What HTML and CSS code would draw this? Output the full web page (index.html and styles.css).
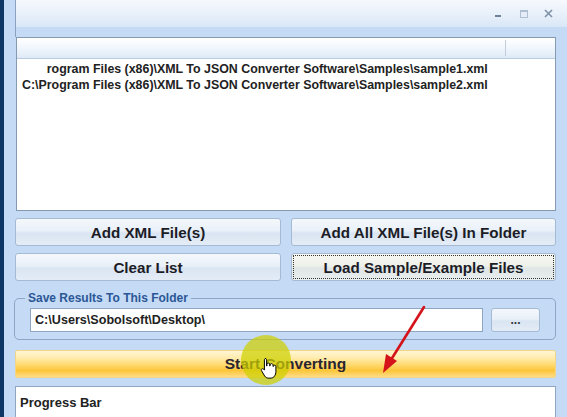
FILE: index.html
```html
<!DOCTYPE html>
<html>
<head>
<meta charset="utf-8">
<link rel="stylesheet" href="styles.css">
</head>
<body>
<div class="window">
  <div class="titlebar">
    <div class="controls">
      <span class="ctl min"></span>
      <span class="ctl max"></span>
      <span class="ctl close">
        <svg width="9" height="9" viewBox="0 0 9 9"><path d="M1 1L8 8M8 1L1 8" stroke="#7f91a8" stroke-width="1.6"/></svg>
      </span>
    </div>
  </div>
  <div class="band"></div>
  <div class="list">
    <div class="list-head"><span class="col"></span></div>
    <div class="list-body">
      <div class="item"><span class="hidden">C:\P</span>rogram Files (x86)\XML To JSON Converter Software\Samples\sample1.xml</div>
      <div class="item">C:\Program Files (x86)\XML To JSON Converter Software\Samples\sample2.xml</div>
    </div>
  </div>
  <div class="btngrid">
    <button class="btn">Add XML File(s)</button>
    <button class="btn">Add All XML File(s) In Folder</button>
    <button class="btn">Clear List</button>
    <button class="btn focus">Load Sample/Example Files</button>
  </div>
  <fieldset class="group">
    <legend>Save Results To This Folder</legend>
    <div class="folder-row">
      <div class="input">C:\Users\Sobolsoft\Desktop\</div>
      <button class="btn small">...</button>
    </div>
  </fieldset>
  <button class="start">Start Converting</button>
  <div class="progress">Progress Bar</div>
</div>

<div class="highlight"></div>
<svg class="arrow" width="60" height="75" viewBox="0 0 60 75">
  <path d="M49 2 L14 58" stroke="#d4141a" stroke-width="2.6" stroke-linecap="round"/>
  <path d="M8 68 L11 49 L22 56 Z" fill="#d4141a"/>
</svg>
<svg class="hand" width="18" height="22" viewBox="0 0 18 22">
  <path d="M5 1.5c1 0 1.6.6 1.6 1.6V9h.3V7.4c0-.9.6-1.4 1.4-1.4s1.4.5 1.4 1.4V9h.3V8c0-.9.6-1.4 1.4-1.4S13 7.1 13 8v1.4h.3c0-.8.6-1.2 1.300-1.2.8 0 1.3.5 1.3 1.4v5.2c0 3-2 6.3-4.8 6.3H8.2c-1.6 0-2.6-.8-3.5-2L1.6 13.8c-.5-.7-.4-1.5.2-1.9.6-.4 1.3-.2 1.8.3l.8.9V3.1c0-1 .6-1.6 1.6-1.6z" fill="#fff" stroke="#000" stroke-width="1"/>
</svg>
</body>
</html>
```

FILE: styles.css
```css
html, body {
  margin: 0;
  padding: 0;
}
body {
  width: 567px;
  height: 417px;
  overflow: hidden;
  position: relative;
  background: #c4daf5;
  border-left: 4px solid #0d3566;
  box-sizing: border-box;
  font-family: "Liberation Sans", Arial, sans-serif;
}
.window {
  display: flex;
  flex-direction: column;
}
.titlebar {
  margin-left: 11px;
  height: 27px;
  border-left: 1px solid #8aa2bf;
  background: linear-gradient(#f6f9fd, #e6eff9 60%, #d9e7f7);
  display: flex;
  justify-content: flex-end;
}
.controls {
  display: flex;
  align-items: center;
  padding-right: 8px;
}
.ctl {
  width: 26px;
  height: 27px;
  display: flex;
  align-items: center;
  justify-content: center;
}
.ctl.min::before {
  content: "";
  width: 6px;
  height: 2px;
  margin-top: 4px;
  background: #6f8299;
}
.ctl.max::before {
  content: "";
  width: 6px;
  height: 5px;
  border: 1px solid #b0bfd0;
  border-top-width: 2px;
  background: #e4edf8;
}
.ctl.close { width: 22px; }
.band {
  margin-left: 11px;
  height: 10px;
  border-left: 1px solid #8aa2bf;
  background: #c5daf4;
}
.list {
  margin-left: 12px;
  width: 540px;
  height: 174px;
  box-sizing: border-box;
  border: 1px solid #8599b1;
  background: #fff;
  display: flex;
  flex-direction: column;
}
.list-head {
  height: 20px;
  border-bottom: 1px solid #b9cbe0;
  background: linear-gradient(#ffffff, #f2f7fd 45%, #dfeaf7);
  position: relative;
}
.col {
  position: absolute;
  left: 488px;
  top: 2px;
  width: 1px;
  height: 16px;
  background: #c3ccd8;
}
.list-body {
  padding: 2px 0 0 5px;
}
.item {
  font-size: 12.4px;
  font-weight: bold;
  color: #222;
  line-height: 16px;
  white-space: nowrap;
}
.hidden { color: #fff; }
.btngrid {
  margin: 7px 0 0 11px;
  width: 541px;
  display: grid;
  grid-template-columns: 266px 265px;
  column-gap: 10px;
  row-gap: 7px;
}
.btn {
  height: 28px;
  border: 1px solid #a6bad3;
  border-radius: 3px;
  background: linear-gradient(#f4f8fc, #e9f0f8 45%, #d9e5f2 55%, #e4ecf6);
  font-family: "Liberation Sans", Arial, sans-serif;
  font-weight: bold;
  font-size: 15.2px;
  color: #1c1c26;
  padding: 0;
}
.btn.focus {
  outline: 1px dotted #333;
  outline-offset: -3px;
  background: linear-gradient(#f7f8f1, #eef1ea 45%, #e0e6e6 55%, #e9eeee);
}
.group {
  margin: 10px 0 0 10px;
  width: 542px;
  height: 49px;
  box-sizing: border-box;
  border: 1px solid #8ea6c4;
  border-radius: 5px;
  padding: 3px 0 0 15px;
}
.group legend {
  font-size: 12px;
  font-weight: bold;
  color: #2b5796;
  padding: 0 3px;
  margin-left: -5px;
  line-height: 14px;
}
.folder-row {
  display: flex;
  gap: 8px;
}
.input {
  width: 453px;
  height: 24px;
  box-sizing: border-box;
  border: 1px solid #8fa6c2;
  background: #fff;
  font-size: 12.6px;
  font-weight: bold;
  color: #222;
  line-height: 22px;
  padding-left: 4px;
}
.btn.small {
  width: 49px;
  height: 24px;
  font-size: 12px;
  line-height: 14px;
  color: #333;
}
.start {
  margin: 10px 0 0 11px;
  width: 541px;
  height: 28px;
  border: 1px solid #f0d48a;
  border-radius: 2px;
  background: linear-gradient(#fff6d4, #ffedb0 25%, #ffd86a 55%, #fcc63a 75%, #ffdc88 100%);
  font-family: "Liberation Sans", Arial, sans-serif;
  font-weight: bold;
  font-size: 15.5px;
  color: #2a2430;
  padding: 0;
}
.progress {
  margin: 8px 0 0 11px;
  width: 541px;
  height: 32px;
  box-sizing: border-box;
  border: 1px solid #8fa6c2;
  background: #fff;
  font-size: 13px;
  font-weight: bold;
  color: #222;
  padding: 8px 0 0 4px;
}
.highlight {
  position: absolute;
  left: 237px;
  top: 335px;
  width: 50px;
  height: 50px;
  border-radius: 50%;
  background: rgba(205, 208, 0, 0.72);
}
.arrow {
  position: absolute;
  left: 371px;
  top: 305px;
}
.hand {
  position: absolute;
  left: 256px;
  top: 357px;
}
```
